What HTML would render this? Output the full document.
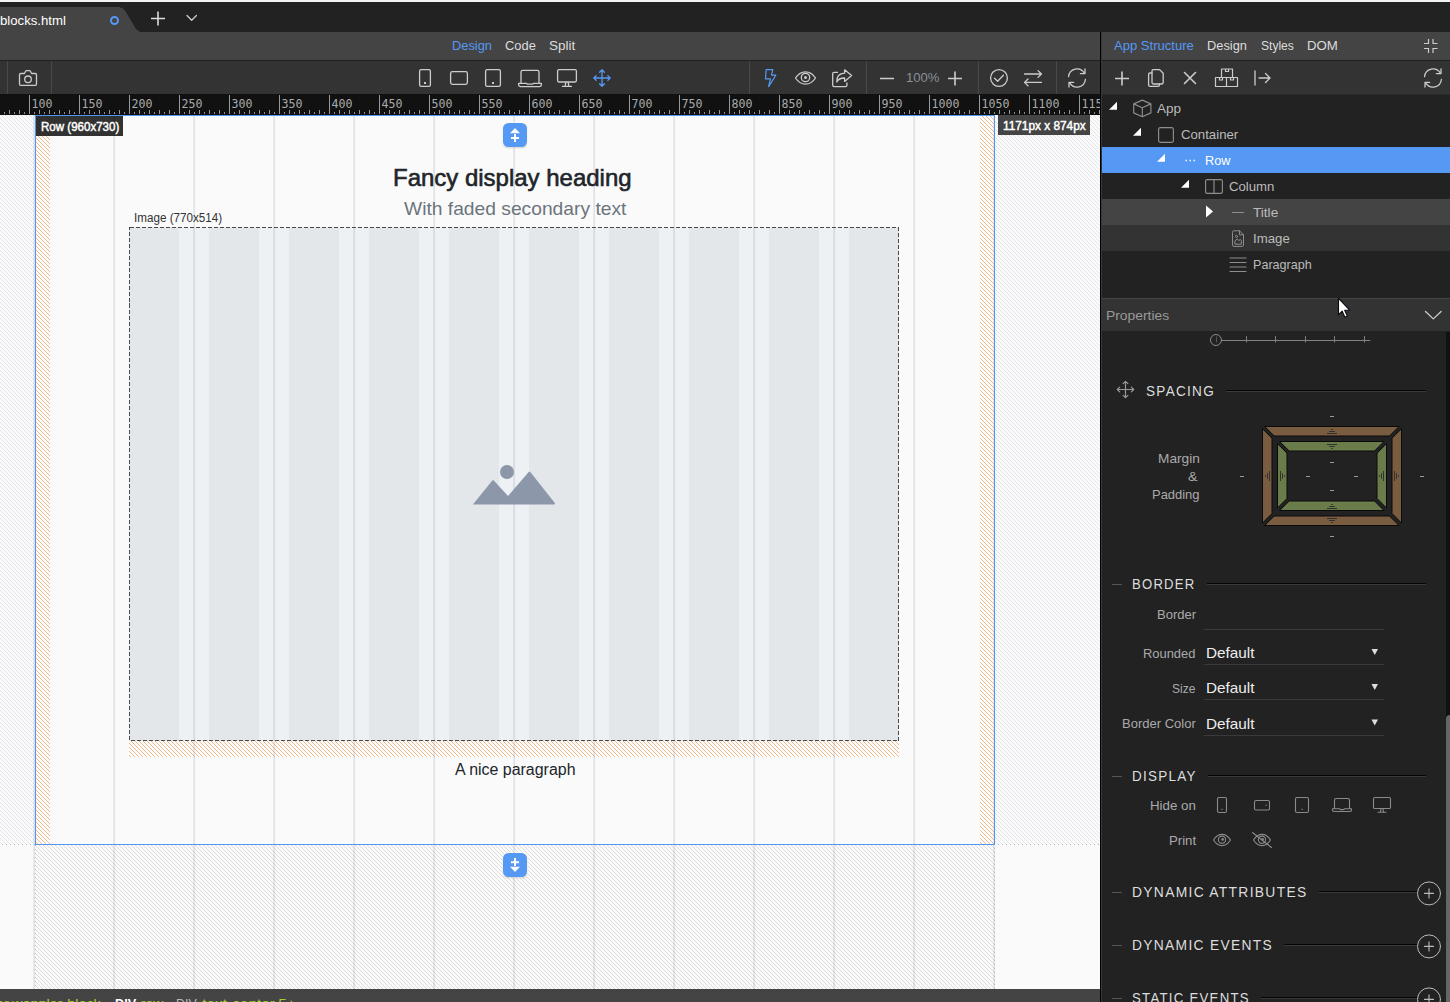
<!DOCTYPE html>
<html lang="en">
<head>
<meta charset="utf-8">
<title>blocks.html</title>
<style>
*{box-sizing:border-box;margin:0;padding:0}
html,body{width:1450px;height:1002px;overflow:hidden;background:#222;font-family:"Liberation Sans",sans-serif;font-size:13px;color:#bbb}
.abs{position:absolute}
#app{position:relative;width:1450px;height:1002px;overflow:hidden;background:#222}
svg{display:block;overflow:visible}
.t{position:absolute;display:inline-block;white-space:nowrap;transform-origin:0 0}
#topline{left:0;top:0;width:1450px;height:2px;background:#f4f4f4}
#tabbar{left:0;top:2px;width:1450px;height:30px;background:#222}
#tab{left:0;top:7px;width:140px;height:25px;background:#444;clip-path:polygon(0 0,119px 0,123px 1.5px,126px 5px,136px 22px,140px 25px,0 25px)}
#tabdot{left:109.5px;top:15.5px;width:9.5px;height:9.5px;border:2px solid #5599f5;border-radius:50%}
#viewbar{left:0;top:32px;width:1100px;height:28px;background:#444}
#toolbar{left:0;top:60px;width:1100px;height:34px;background:#333;border-top:1px solid #202020}
.vsep{position:absolute;top:61px;width:1px;height:33px;background:#484848}
#ruler{left:0;top:94px;width:1100px;height:21px;background:#111;overflow:hidden}
#ruler .t5{position:absolute;left:-1px;bottom:1px;width:1101px;height:2px;background:repeating-linear-gradient(90deg,#8a8a8a 0,#8a8a8a 1px,transparent 1px,transparent 5px)}
#ruler .t10{position:absolute;left:-1px;bottom:1px;width:1101px;height:4px;background:repeating-linear-gradient(90deg,#999 0,#999 1px,transparent 1px,transparent 10px)}
#ruler .t50{position:absolute;left:-21px;top:1px;width:1121px;height:19px;background:repeating-linear-gradient(90deg,#999 0,#999 1px,transparent 1px,transparent 50px)}
#canvas{left:0;top:115px;width:1100px;height:874px;background:#fafafa;overflow:hidden}
.ins{width:24px;height:24px;border-radius:5.5px;background:#5599f5;box-shadow:0 0 0 .6px rgba(255,250,240,.9),0 1px 1.5px rgba(0,0,0,.25)}
.lbl{height:20px;background:rgba(0,0,0,.8)}
#status{left:0;top:989px;width:1100px;height:13px;background:#444;overflow:hidden}
#divider{left:1100px;top:32px;width:2px;height:970px;background:#363636;border-left:1px solid #000}
#rtabs{left:1102px;top:32px;width:348px;height:28px;background:#444}
#rtool{left:1102px;top:60px;width:348px;height:35px;background:#333;border-top:1px solid #202020;border-bottom:1px solid #2a2a2a}
#tree{left:1102px;top:95px;width:348px;height:204px;background:#222}
.row{position:absolute;left:0;width:348px;height:26px}
#prophead{left:1102px;top:298px;width:348px;height:34px;background:#333;border-top:1px solid #454545;border-bottom:1px solid #161616}
#props{left:1102px;top:331px;width:348px;height:671px;background:#222;overflow:hidden}
</style>
<style>
#h1{transform:scaleX(1.0163)}
#h2{transform:scaleX(1.0345)}
#imglbl{transform:scaleX(0.9721)}
#para{transform:scaleX(1.0220)}
#rowlbl{transform:scaleX(0.9710)}
#sizelbl{transform:scaleX(0.9954)}
#st1{transform:scaleX(1.1072)}
#st2{transform:scaleX(0.9782)}
#st3{transform:scaleX(1.0707)}
#st4{transform:scaleX(0.9598)}
#st5{transform:scaleX(1.1819)}
#tabtxt{transform:scaleX(0.9838)}
#v1{transform:scaleX(0.9859)}
#v2{transform:scaleX(0.9911)}
#v3{transform:scaleX(1.0397)}
#zoom{transform:scaleX(1.0075)}
#r1{transform:scaleX(1.0038)}
#r2{transform:scaleX(0.9859)}
#r3{transform:scaleX(0.9264)}
#r4{transform:scaleX(1.0183)}
#tr0{transform:scaleX(1.0415)}
#tr1{transform:scaleX(1.0146)}
#tr2{transform:scaleX(0.9763)}
#tr3{transform:scaleX(1.0135)}
#tr4{transform:scaleX(1.0466)}
#tr5{transform:scaleX(1.0182)}
#tr6{transform:scaleX(0.9684)}
#ph{transform:scaleX(1.0667)}
#sh1{transform:scaleX(0.9831)}
#sh2{transform:scaleX(0.9502)}
#sh3{transform:scaleX(0.9780)}
#sh4{transform:scaleX(1.0032)}
#sh5{transform:scaleX(1.0010)}
#sh6{transform:scaleX(0.9589)}
#l1{transform:scaleX(1.0516)}
#l2{transform:scaleX(1.0900)}
#l3{transform:scaleX(0.9954)}
#l4{transform:scaleX(1.0018)}
#l5{transform:scaleX(0.9928)}
#l6{transform:scaleX(0.9211)}
#l7{transform:scaleX(1.0013)}
#l8{transform:scaleX(1.0220)}
#l9{transform:scaleX(1.0137)}
#d1{transform:scaleX(1.0204)}
#d2{transform:scaleX(1.0204)}
#d3{transform:scaleX(1.0204)}
</style>
</head>
<body>
<div id="app">
<div id="topline" class="abs"></div><div id="tabbar" class="abs"></div><div id="tab" class="abs"></div><div id="tabdot" class="abs"></div>
<div id="viewbar" class="abs"></div><div id="toolbar" class="abs"></div>
<div class="vsep" style="left:7px"></div>
<div class="vsep" style="left:51px"></div>
<div class="vsep" style="left:749px"></div>
<div class="vsep" style="left:866px"></div>
<div class="vsep" style="left:978px"></div>
<div class="vsep" style="left:1056px"></div>
<div id="ruler" class="abs"><div class="t5"></div><div class="t10"></div><div class="t50"></div></div>
<div id="divider" class="abs"></div><div id="rtabs" class="abs"></div><div id="rtool" class="abs"></div>
<div id="canvas" class="abs">
<svg class="abs" style="left:0;top:0" width="1100" height="874" shape-rendering="crispEdges">
<defs>
<pattern id="hg" x="0" y="3" width="4" height="4" patternUnits="userSpaceOnUse"><rect width="4" height="4" fill="#fbfbfb"/><path d="M0 0h1v1h-1zM1 1h1v1h-1zM2 2h1v1h-1zM3 3h1v1h-1z" fill="#e1e5e9"/></pattern>
<pattern id="hd" x="0" y="3" width="4" height="4" patternUnits="userSpaceOnUse"><rect width="4" height="4" fill="#fbfbfb"/><path d="M0 0h1v1h-1zM1 1h1v1h-1zM2 2h1v1h-1zM3 3h1v1h-1z" fill="#dbdbdb"/></pattern>
<pattern id="ho" x="0" y="3" width="4" height="4" patternUnits="userSpaceOnUse"><rect width="4" height="4" fill="#fcfdfe"/><path d="M0 0h1v1h-1zM1 1h1v1h-1zM2 2h1v1h-1zM3 3h1v1h-1z" fill="#f6b985"/></pattern>
<pattern id="st" x="129" width="80" height="8" patternUnits="userSpaceOnUse"><rect width="50" height="8" fill="#e4e7ea"/><rect x="50" width="30" height="8" fill="#edf1f4"/></pattern>
</defs>
<rect x="0" y="0" width="35" height="730" fill="url(#hg)"/>
<rect x="995" y="0" width="105" height="730" fill="url(#hg)"/>
<rect x="35" y="730" width="960" height="144" fill="url(#hd)"/>
<rect x="36" y="1" width="14" height="728" fill="url(#ho)"/>
<rect x="980" y="1" width="14" height="728" fill="url(#ho)"/>
<rect x="129" y="112" width="770" height="514" fill="url(#st)"/>
<rect x="129" y="626" width="770" height="16" fill="url(#ho)"/>
<rect x="33" y="0" width="1" height="874" fill="#8a96a8" fill-opacity=".17"/><rect x="34" y="0" width="1" height="874" fill="#8a96a8" fill-opacity=".24"/>
<rect x="113" y="0" width="1" height="874" fill="#8a96a8" fill-opacity=".17"/><rect x="114" y="0" width="1" height="874" fill="#8a96a8" fill-opacity=".24"/>
<rect x="193" y="0" width="1" height="874" fill="#8a96a8" fill-opacity=".17"/><rect x="194" y="0" width="1" height="874" fill="#8a96a8" fill-opacity=".24"/>
<rect x="273" y="0" width="1" height="874" fill="#8a96a8" fill-opacity=".17"/><rect x="274" y="0" width="1" height="874" fill="#8a96a8" fill-opacity=".24"/>
<rect x="353" y="0" width="1" height="874" fill="#8a96a8" fill-opacity=".17"/><rect x="354" y="0" width="1" height="874" fill="#8a96a8" fill-opacity=".24"/>
<rect x="433" y="0" width="1" height="874" fill="#8a96a8" fill-opacity=".17"/><rect x="434" y="0" width="1" height="874" fill="#8a96a8" fill-opacity=".24"/>
<rect x="513" y="0" width="1" height="874" fill="#8a96a8" fill-opacity=".17"/><rect x="514" y="0" width="1" height="874" fill="#8a96a8" fill-opacity=".24"/>
<rect x="593" y="0" width="1" height="874" fill="#8a96a8" fill-opacity=".17"/><rect x="594" y="0" width="1" height="874" fill="#8a96a8" fill-opacity=".24"/>
<rect x="673" y="0" width="1" height="874" fill="#8a96a8" fill-opacity=".17"/><rect x="674" y="0" width="1" height="874" fill="#8a96a8" fill-opacity=".24"/>
<rect x="753" y="0" width="1" height="874" fill="#8a96a8" fill-opacity=".17"/><rect x="754" y="0" width="1" height="874" fill="#8a96a8" fill-opacity=".24"/>
<rect x="833" y="0" width="1" height="874" fill="#8a96a8" fill-opacity=".17"/><rect x="834" y="0" width="1" height="874" fill="#8a96a8" fill-opacity=".24"/>
<rect x="913" y="0" width="1" height="874" fill="#8a96a8" fill-opacity=".17"/><rect x="914" y="0" width="1" height="874" fill="#8a96a8" fill-opacity=".24"/>
<rect x="993" y="0" width="1" height="874" fill="#8a96a8" fill-opacity=".17"/><rect x="994" y="0" width="1" height="874" fill="#8a96a8" fill-opacity=".24"/>
<path d="M0 729.5H35" stroke="#b4b4b4" stroke-width="1" stroke-dasharray="1 3" stroke-dashoffset="2" fill="none"/><path d="M995 729.5H1100" stroke="#b4b4b4" stroke-width="1" stroke-dasharray="1 3" stroke-dashoffset="1" fill="none"/>
<path d="M35.5 730V874" stroke="#b4b4b4" stroke-width="1" stroke-dasharray="1 3" fill="none"/><path d="M994.5 729V874" stroke="#b4b4b4" stroke-width="1" stroke-dasharray="1 3" fill="none"/>
<rect x="129.5" y="112.5" width="769" height="513" fill="none" stroke="#4a4a4a" stroke-width="1" stroke-dasharray="4 2"/>
<rect x="35.5" y="0.5" width="959" height="729" fill="none" stroke="#4f95f3" stroke-width="1"/>
</svg>
<svg class="abs" style="left:472px;top:349px" width="84" height="41" viewBox="472 464 84 41"><path d="M472.900 504.400 L492.300 480.600 Q493 479.8 493.8 480.6 L508 495.9 L528.7 471.9 Q529.5 471 530.3 471.9 L554.8 503 Q555.6 504.4 554 504.4 Z" fill="#8c97a9"/><circle cx="507" cy="472" r="7" fill="#8c97a9"/></svg>
<div class="abs ins" style="left:503px;top:8px"><svg width="24" height="24"><path d="M7 10.200L12 5L17 10.200Z" fill="#fff"/><path d="M12 11v8M8 15h8" stroke="#fff" stroke-width="2" fill="none"/></svg></div>
<div class="abs ins" style="left:503px;top:738px"><svg width="24" height="24"><path d="M7 13.800L12 19L17 13.800Z" fill="#fff"/><path d="M12 5v8M8 9.200h8" stroke="#fff" stroke-width="2" fill="none"/></svg></div>
<div class="abs lbl" style="left:36px;top:1px;width:87px;height:19.5px"></div>
<div class="abs lbl" style="left:998px;top:0;width:92px;height:19.6px;background:#444"></div>
</div>
<span id="h1" class="t" style="left:392.50px;top:162.12px;font-size:23.6px;line-height:32px;color:#212529;-webkit-text-stroke:0.6px #212529;">Fancy display heading</span>
<span id="h2" class="t" style="left:403.60px;top:197.16px;font-size:18.6px;line-height:24px;color:#6c757d;">With faded secondary text</span>
<span id="imglbl" class="t" style="left:133.90px;top:210.84px;font-size:12px;line-height:14px;color:#333;">Image (770x514)</span>
<span id="para" class="t" style="left:454.50px;top:760.49px;font-size:15.6px;line-height:20px;color:#212529;">A nice paragraph</span>
<span id="rowlbl" class="t" style="left:40.80px;top:119.08px;font-size:11.9px;line-height:16px;color:#fff;-webkit-text-stroke:0.45px #fff;">Row (960x730)</span>
<span id="sizelbl" class="t" style="left:1003.00px;top:117.98px;font-size:11.9px;line-height:16px;color:#fff;-webkit-text-stroke:0.45px #fff;">1171px x 874px</span>
<div id="status" class="abs"></div>
<span id="st1" class="t" style="left:-4.20px;top:995.10px;font-size:13px;line-height:18px;color:#a4cf30;">er.wappler-block</span>
<span id="st2" class="t" style="left:115.40px;top:995.10px;font-size:13px;line-height:18px;color:#fff;font-weight:bold;">DIV</span>
<span id="st3" class="t" style="left:137.30px;top:995.10px;font-size:13px;line-height:18px;color:#a4cf30;">.row</span>
<span id="st4" class="t" style="left:175.80px;top:995.10px;font-size:13px;line-height:18px;color:#bbb;">DIV</span>
<span id="st5" class="t" style="left:197.80px;top:995.10px;font-size:13px;line-height:18px;color:#a4cf30;">.text-center.5+</span>
<span id="tabtxt" class="t" style="left:0.20px;top:12.16px;font-size:13.4px;line-height:18px;color:#fff;">blocks.html</span>
<span id="v1" class="t" style="left:451.70px;top:36.50px;font-size:13px;line-height:18px;color:#5599f5;">Design</span>
<span id="v2" class="t" style="left:505.30px;top:36.50px;font-size:13px;line-height:18px;color:#ddd;">Code</span>
<span id="v3" class="t" style="left:549.30px;top:36.50px;font-size:13px;line-height:18px;color:#ddd;">Split</span>
<span id="zoom" class="t" style="left:905.80px;top:68.80px;font-size:13px;line-height:18px;color:#8a8f98;">100%</span>
<span id="r1" class="t" style="left:1113.80px;top:36.50px;font-size:13px;line-height:18px;color:#5599f5;">App Structure</span>
<span id="r2" class="t" style="left:1207.20px;top:36.50px;font-size:13px;line-height:18px;color:#ddd;">Design</span>
<span id="r3" class="t" style="left:1260.80px;top:36.50px;font-size:13px;line-height:18px;color:#ddd;">Styles</span>
<span id="r4" class="t" style="left:1307.40px;top:36.50px;font-size:13px;line-height:18px;color:#ddd;">DOM</span>
<span class="t" style="left:31.5px;top:96.5px;font:11.6px/14px 'DejaVu Sans Mono','Liberation Mono',monospace;color:#aaa;">100</span>
<span class="t" style="left:81.5px;top:96.5px;font:11.6px/14px 'DejaVu Sans Mono','Liberation Mono',monospace;color:#aaa;">150</span>
<span class="t" style="left:131.5px;top:96.5px;font:11.6px/14px 'DejaVu Sans Mono','Liberation Mono',monospace;color:#aaa;">200</span>
<span class="t" style="left:181.5px;top:96.5px;font:11.6px/14px 'DejaVu Sans Mono','Liberation Mono',monospace;color:#aaa;">250</span>
<span class="t" style="left:231.5px;top:96.5px;font:11.6px/14px 'DejaVu Sans Mono','Liberation Mono',monospace;color:#aaa;">300</span>
<span class="t" style="left:281.5px;top:96.5px;font:11.6px/14px 'DejaVu Sans Mono','Liberation Mono',monospace;color:#aaa;">350</span>
<span class="t" style="left:331.5px;top:96.5px;font:11.6px/14px 'DejaVu Sans Mono','Liberation Mono',monospace;color:#aaa;">400</span>
<span class="t" style="left:381.5px;top:96.5px;font:11.6px/14px 'DejaVu Sans Mono','Liberation Mono',monospace;color:#aaa;">450</span>
<span class="t" style="left:431.5px;top:96.5px;font:11.6px/14px 'DejaVu Sans Mono','Liberation Mono',monospace;color:#aaa;">500</span>
<span class="t" style="left:481.5px;top:96.5px;font:11.6px/14px 'DejaVu Sans Mono','Liberation Mono',monospace;color:#aaa;">550</span>
<span class="t" style="left:531.5px;top:96.5px;font:11.6px/14px 'DejaVu Sans Mono','Liberation Mono',monospace;color:#aaa;">600</span>
<span class="t" style="left:581.5px;top:96.5px;font:11.6px/14px 'DejaVu Sans Mono','Liberation Mono',monospace;color:#aaa;">650</span>
<span class="t" style="left:631.5px;top:96.5px;font:11.6px/14px 'DejaVu Sans Mono','Liberation Mono',monospace;color:#aaa;">700</span>
<span class="t" style="left:681.5px;top:96.5px;font:11.6px/14px 'DejaVu Sans Mono','Liberation Mono',monospace;color:#aaa;">750</span>
<span class="t" style="left:731.5px;top:96.5px;font:11.6px/14px 'DejaVu Sans Mono','Liberation Mono',monospace;color:#aaa;">800</span>
<span class="t" style="left:781.5px;top:96.5px;font:11.6px/14px 'DejaVu Sans Mono','Liberation Mono',monospace;color:#aaa;">850</span>
<span class="t" style="left:831.5px;top:96.5px;font:11.6px/14px 'DejaVu Sans Mono','Liberation Mono',monospace;color:#aaa;">900</span>
<span class="t" style="left:881.5px;top:96.5px;font:11.6px/14px 'DejaVu Sans Mono','Liberation Mono',monospace;color:#aaa;">950</span>
<span class="t" style="left:931.5px;top:96.5px;font:11.6px/14px 'DejaVu Sans Mono','Liberation Mono',monospace;color:#aaa;">1000</span>
<span class="t" style="left:981.5px;top:96.5px;font:11.6px/14px 'DejaVu Sans Mono','Liberation Mono',monospace;color:#aaa;">1050</span>
<span class="t" style="left:1031.5px;top:96.5px;font:11.6px/14px 'DejaVu Sans Mono','Liberation Mono',monospace;color:#aaa;">1100</span>
<span class="t" style="left:1081.5px;top:96.5px;font:11.6px/14px 'DejaVu Sans Mono','Liberation Mono',monospace;color:#aaa;width:18px;overflow:hidden;">1150</span>
<svg class="abs" style="left:0;top:0" width="1450" height="95" fill="none" stroke="#ccc" stroke-width="1.300" stroke-linecap="round" stroke-linejoin="round">
<path d="M158 11.500v14M151 18.500h14" stroke="#ddd" stroke-width="1.600" stroke-linecap="butt"/>
<path d="M187 15.500l4.700 4.700l4.700-4.700"/>
<path d="M20.800 73.500h3.600l1.200-2.300q.3-.6 1-.6h2.800q.7 0 1 .6l1.200 2.300h3.600q1.300 0 1.300 1.300v9.200q0 1.300-1.300 1.300h-14.400q-1.300 0-1.300-1.300v-9.200q0-1.300 1.300-1.300z"/><circle cx="28" cy="79.300" r="3.300"/>
<rect x="419.600" y="69.600" width="10.800" height="16.800" rx="1.600"/><rect x="424" y="82" width="2" height="2" fill="#ccc" stroke="none"/>
<rect x="450.600" y="71.600" width="16.800" height="12.800" rx="1.800"/>
<rect x="485.600" y="69.600" width="14.800" height="16.800" rx="1.600"/><rect x="492" y="82" width="2" height="2" fill="#ccc" stroke="none"/>
<path d="M521 83v-11q0-1.600 1.600-1.600h14.800q1.600 0 1.600 1.600v11"/><path d="M518.600 83.400h8l1 .8h4.800l1-.8h8v1.400q0 1.800-1.800 1.800h-19.200q-1.800 0-1.800-1.800z"/>
<rect x="557.600" y="69.600" width="18.800" height="12.400" rx="1.400"/><path d="M565.800 82.200l-.6 4M568.200 82.200l.6 4M562.500 86.400h9"/>
<path d="M602 69.800v16.400M593.800 78h16.400M599.600 72.200l2.400-2.400l2.400 2.400M599.600 83.800l2.400 2.400l2.400-2.400M596.200 75.600l-2.400 2.400l2.400 2.400M607.800 75.600l2.400 2.400l-2.400 2.400" stroke="#5599f5"/>
<path d="M766.200 69.600h6.600l-1.300 5.600h4.300l-7.200 11.400l1.800-7.800h-4.900z" stroke="#5599f5" stroke-width="1.200"/>
<path d="M795.500 78q4.200-6.200 10-6.200t10 6.200q-4.200 6.200-10 6.200t-10-6.200z"/><circle cx="805.500" cy="77.500" r="4.200"/><circle cx="805.500" cy="77.500" r="1.500" fill="#ccc" stroke="none"/>
<path d="M837.500 72.400h-3.400q-1.400 0-1.400 1.400v11.400q0 1.400 1.400 1.400h11.400q1.400 0 1.400-1.400v-2.400"/><path d="M844.600 69.800l7 5.800l-7 5.800v-3.400q-5.600-.2-7.800 4q-.4-8.400 7.800-8.800z"/>
<path d="M880 78.500h14M948 78.500h14M955 71.500v14" stroke-width="1.600" stroke-linecap="butt"/>
<circle cx="999" cy="78" r="8.400"/><path d="M994.600 78.200l3 3l5.800-6"/>
<path d="M1024.500 74h17M1038 70.600l3.500 3.400l-3.500 3.400M1041.500 82.400h-17M1028 79l-3.500 3.400l3.500 3.400"/>
<path d="M1068.6 76.5a8.500 8.500 0 0 1 15.600-3.700M1085.4 79.5a8.500 8.500 0 0 1 -15.600 3.700"/><path d="M1085 69v4.600h-4.600M1069 87v-4.600h4.600"/>
<path d="M1424.6 76.5a8.500 8.500 0 0 1 15.600-3.700M1441.4 79.5a8.500 8.500 0 0 1 -15.600 3.700"/><path d="M1441 69v4.600h-4.600M1425 87v-4.600h4.600"/>
<path d="M1424 43.500h4.500v-4.500M1437.500 43.500h-4.500v-4.500M1424 48.500h4.500v4.500M1437.500 48.500h-4.500v4.500" stroke-linecap="butt" stroke-linejoin="miter" stroke-width="1.200"/>
<path d="M1115 78.500h14M1122 71.500v14" stroke-width="1.600" stroke-linecap="butt"/>
<path d="M1152 82.500v-11.500q0-1.400 1.400-1.400h6.200l3.600 3.600v9.400q0 1.400-1.400 1.400h-8.400q-1.400 0-1.400-1.500z"/><path d="M1152 73h-2q-1.400 0-1.400 1.400v10.600q0 1.400 1.400 1.400h8q1.400 0 1.400-1.400v-1"/>
<path d="M1184.500 72.500l11 11M1195.500 72.500l-11 11" stroke-width="1.600"/>
<path d="M1221.500 69h11v8.500h-11zM1215.500 77.500h11v9h-11zM1226.500 77.500h11v9h-11zM1225.500 69v2.500h3v-2.500M1219.500 77.500v2.500h3v-2.500M1230.500 77.500v2.500h3v-2.500" stroke-width="1.200"/>
<path d="M1255 71v14M1259 78h10.500M1265.500 73.500l4.500 4.500l-4.500 4.500"/>
</svg>
<div id="tree" class="abs">
<div class="row" style="top:0px;background:#222"></div>
<div class="row" style="top:26px;background:#222"></div>
<div class="row" style="top:52px;background:#5599f5"></div>
<div class="row" style="top:78px;background:#222"></div>
<div class="row" style="top:104px;background:#444"></div>
<div class="row" style="top:130px;background:#333"></div>
<div class="row" style="top:156px;background:#222"></div>
<svg class="abs" style="left:0;top:0" width="348" height="200" fill="none" stroke="#8e8e8e" stroke-width="1.150" stroke-linecap="round" stroke-linejoin="round"><path d="M15 6.7v8h-8z" fill="#fff" stroke="none"/><path d="M40.3 5.100000000000001l8.600 3.800v9l-8.600 3.800l-8.600-3.800v-9zM31.699999999999996 8.9l8.600 3.800l8.600-3.800M40.3 12.700000000000001v9"/><path d="M39 32.7v8h-8z" fill="#fff" stroke="none"/><rect x="56.6" y="32.6" width="14.800" height="14.800" rx="1.800"/><path d="M63 58.7v8h-8z" fill="#fff" stroke="none"/><path d="M83.5 65.5h1.400M87.5 65.5h1.400M91.5 65.5h1.400" stroke="#fff" stroke-width="1.600" stroke-linecap="butt"/><path d="M87 84.7v8h-8z" fill="#fff" stroke="none"/><rect x="103.59999999999991" y="84.6" width="16.800" height="13.800" rx="1.600"/><path d="M112 84.6v13.800"/><path d="M104 110.5l7 6l-7 6z" fill="#fff" stroke="none"/><path d="M130.5 117.5h11"/><path d="M130.5 137.0q0-1.200 1.200-1.200h5.800l4 4v10.400q0 1.200-1.200 1.200h-8.600q-1.200 0-1.200-1.200zM137.5 135.8v4h4" stroke-width="1"/><path d="M132.9 148.8v-2.800l2.200-2l1.800 1.600l1.400-1.200l1 1v3.400z" stroke-width="1"/><circle cx="134.5" cy="141.4" r="1.100" stroke-width="1"/><path d="M128 163h16M128 167.5h16M128 172h16M128 176.5h16" stroke-width="1.100"/></svg>
</div>
<span id="tr0" class="t" style="left:1156.80px;top:99.70px;font-size:13px;line-height:18px;color:#bbb;">App</span>
<span id="tr1" class="t" style="left:1180.60px;top:125.70px;font-size:13px;line-height:18px;color:#bbb;">Container</span>
<span id="tr2" class="t" style="left:1204.80px;top:151.70px;font-size:13px;line-height:18px;color:#fff;">Row</span>
<span id="tr3" class="t" style="left:1228.70px;top:177.70px;font-size:13px;line-height:18px;color:#bbb;">Column</span>
<span id="tr4" class="t" style="left:1252.80px;top:203.70px;font-size:13px;line-height:18px;color:#bbb;">Title</span>
<span id="tr5" class="t" style="left:1252.80px;top:229.70px;font-size:13px;line-height:18px;color:#bbb;">Image</span>
<span id="tr6" class="t" style="left:1252.80px;top:255.70px;font-size:13px;line-height:18px;color:#bbb;">Paragraph</span>
<div id="prophead" class="abs"></div>
<span id="ph" class="t" style="left:1105.80px;top:307.10px;font-size:13px;line-height:18px;color:#999;">Properties</span>
<svg class="abs" style="left:1102px;top:299px" width="348" height="32" fill="none" stroke="#ccc" stroke-width="1.300" stroke-linecap="round" stroke-linejoin="round"><path d="M323.500 12.500l7.800 7.400l7.800-7.400"/></svg>
<div id="props" class="abs">
<svg class="abs" style="left:0;top:0" width="348" height="671" fill="none" stroke-linecap="round" stroke-linejoin="round"><circle cx="114" cy="9" r="5.500" stroke="#8a8a8a"/><path d="M119.5 9.5H268" stroke="#828282"/><path d="M144.5 5.5V11" stroke="#828282"/><path d="M173.5 5.5V11" stroke="#828282"/><path d="M203.5 5.5V11" stroke="#828282"/><path d="M232.5 5.5V11" stroke="#828282"/><path d="M262.5 5.5V11" stroke="#828282"/><path d="M114.5 6v5" stroke="#555"/><rect x="124" y="59" width="200" height="1" fill="#050505"/><rect x="124" y="60" width="200" height="1" fill="#3a3a3a"/><rect x="10" y="253" width="10" height="1" fill="#555"/><rect x="105" y="252" width="219" height="1" fill="#050505"/><rect x="105" y="253" width="219" height="1" fill="#3a3a3a"/><rect x="10" y="445" width="10" height="1" fill="#555"/><rect x="106" y="444" width="218" height="1" fill="#050505"/><rect x="106" y="445" width="218" height="1" fill="#3a3a3a"/><rect x="10" y="561" width="10" height="1" fill="#555"/><rect x="217" y="560" width="99" height="1" fill="#050505"/><rect x="217" y="561" width="99" height="1" fill="#3a3a3a"/><circle cx="327" cy="562.4" r="11.500" stroke="#bbb" stroke-width="1" fill="#222"/><path d="M322.5 562.4h9M327 557.9v9" stroke="#bbb" stroke-width="1.100"/><rect x="10" y="614" width="10" height="1" fill="#555"/><rect x="182" y="613" width="134" height="1" fill="#050505"/><rect x="182" y="614" width="134" height="1" fill="#3a3a3a"/><circle cx="327" cy="615.4" r="11.500" stroke="#bbb" stroke-width="1" fill="#222"/><path d="M322.5 615.4h9M327 610.9v9" stroke="#bbb" stroke-width="1.100"/><rect x="10" y="667" width="10" height="1" fill="#555"/><rect x="159" y="666" width="157" height="1" fill="#050505"/><rect x="159" y="667" width="157" height="1" fill="#3a3a3a"/><circle cx="327" cy="668.4" r="11.500" stroke="#bbb" stroke-width="1" fill="#222"/><path d="M322.5 668.4h9M327 663.9v9" stroke="#bbb" stroke-width="1.100"/><path d="M23.5 50.3v16.400M15.3 58.5h16.400M21.1 52.7l2.400-2.400l2.400 2.400M21.1 64.3l2.400 2.400l2.400-2.400M17.7 56.1l-2.400 2.400l2.400 2.400M29.3 56.1l2.400 2.400l-2.400 2.400" stroke="#999" stroke-width="1.200"/><path d="M163 95.5H297L287.5 105H172.5Z" fill="#7a5c40" stroke="#0a0a0a" stroke-width="1" stroke-linejoin="miter"/><path d="M163 194.5H297L287.5 185H172.5Z" fill="#7a5c40" stroke="#0a0a0a" stroke-width="1" stroke-linejoin="miter"/><path d="M160.5 98V192L170 182.5V107.5Z" fill="#7a5c40" stroke="#0a0a0a" stroke-width="1" stroke-linejoin="miter"/><path d="M299.5 98V192L290 182.5V107.5Z" fill="#7a5c40" stroke="#0a0a0a" stroke-width="1" stroke-linejoin="miter"/><path d="M178 110.5H282L272.5 120H187.5Z" fill="#6b7c4b" stroke="#0a0a0a" stroke-width="1" stroke-linejoin="miter"/><path d="M178 179.5H282L272.5 170H187.5Z" fill="#6b7c4b" stroke="#0a0a0a" stroke-width="1" stroke-linejoin="miter"/><path d="M175.5 113V177L185 167.5V122.5Z" fill="#6b7c4b" stroke="#0a0a0a" stroke-width="1" stroke-linejoin="miter"/><path d="M284.5 113V177L275 167.5V122.5Z" fill="#6b7c4b" stroke="#0a0a0a" stroke-width="1" stroke-linejoin="miter"/><path d="M225 102.5h10M227.2 100.5h5.600M229.2 98.5h1.600" stroke="#2a2a2a" stroke-width=".9" stroke-linecap="butt"/><path d="M225 113.5h10M227.2 115.5h5.600M229.2 117.5h1.600" stroke="#2a2a2a" stroke-width=".9" stroke-linecap="butt"/><path d="M225 177.5h10M227.2 175.5h5.600M229.2 173.5h1.600" stroke="#2a2a2a" stroke-width=".9" stroke-linecap="butt"/><path d="M225 187.5h10M227.2 189.5h5.600M229.2 191.5h1.600" stroke="#2a2a2a" stroke-width=".9" stroke-linecap="butt"/><path d="M167.5 140v10M165.5 142.2v5.600M163.5 144.2v1.600" stroke="#2a2a2a" stroke-width=".9" stroke-linecap="butt"/><path d="M178.5 140v10M180.5 142.2v5.600M182.5 144.2v1.600" stroke="#2a2a2a" stroke-width=".9" stroke-linecap="butt"/><path d="M281.5 140v10M279.5 142.2v5.600M277.5 144.2v1.600" stroke="#2a2a2a" stroke-width=".9" stroke-linecap="butt"/><path d="M292.5 140v10M294.5 142.2v5.600M296.5 144.2v1.600" stroke="#2a2a2a" stroke-width=".9" stroke-linecap="butt"/><path d="M228 85.5h4" stroke="#999" stroke-width="1" stroke-linecap="butt"/><path d="M228 205.5h4" stroke="#999" stroke-width="1" stroke-linecap="butt"/><path d="M138 145.5h4" stroke="#999" stroke-width="1" stroke-linecap="butt"/><path d="M318 145.5h4" stroke="#999" stroke-width="1" stroke-linecap="butt"/><path d="M228 131.5h4" stroke="#999" stroke-width="1" stroke-linecap="butt"/><path d="M228 159.5h4" stroke="#999" stroke-width="1" stroke-linecap="butt"/><path d="M204 145.5h4" stroke="#999" stroke-width="1" stroke-linecap="butt"/><path d="M252 145.5h4" stroke="#999" stroke-width="1" stroke-linecap="butt"/><path d="M102 298.5H282" stroke="#3a3a3a" stroke-width="1"/><path d="M102 333.5H282" stroke="#3a3a3a" stroke-width="1"/><path d="M102 368.5H282" stroke="#3a3a3a" stroke-width="1"/><path d="M102 404.5H282" stroke="#3a3a3a" stroke-width="1"/><path d="M269.5 318h6.500l-3.250 6z" fill="#ddd" stroke="none"/><path d="M269.5 353h6.500l-3.250 6z" fill="#ddd" stroke="none"/><path d="M269.5 388.5h6.500l-3.250 6z" fill="#ddd" stroke="none"/><rect x="115.5" y="466.5" width="9" height="15" rx="1.500" stroke="#8a8a8a" stroke-width="1.100"/><rect x="119.4" y="477.8" width="1.200" height="1.200" fill="#8a8a8a" stroke="none"/><rect x="152.5" y="469.5" width="15" height="9.500" rx="1.500" stroke="#8a8a8a" stroke-width="1.100"/><rect x="163.6" y="473.6" width="1.200" height="1.200" fill="#8a8a8a" stroke="none"/><rect x="193.5" y="466.5" width="13" height="15" rx="1.500" stroke="#8a8a8a" stroke-width="1.100"/><rect x="199.4" y="477.8" width="1.200" height="1.200" fill="#8a8a8a" stroke="none"/><path d="M232.5 477.5v-8.500q0-1.500 1.500-1.500h12q1.500 0 1.500 1.500v8.500" stroke="#8a8a8a" stroke-width="1.100"/><path d="M230.5 477.8h7l1 .8h3l1-.8h7v1.200q0 1.500-1.500 1.500h-16q-1.500 0-1.500-1.500z" stroke="#8a8a8a" stroke-width="1.100"/><rect x="271.5" y="466.5" width="17" height="11" rx="1.300" stroke="#8a8a8a" stroke-width="1.100"/><path d="M279 477.7l-.5 3.300M281 477.7l.5 3.300M276 481.3h8" stroke="#8a8a8a" stroke-width="1.100"/><path d="M111.5 509q3.600-5.600 8.500-5.600t8.500 5.600q-3.600 5.600-8.500 5.600t-8.500-5.600z" stroke="#8a8a8a" stroke-width="1.100"/><circle cx="120" cy="508.7" r="3.600" stroke="#8a8a8a" stroke-width="1.100"/><circle cx="120.6" cy="508.4" r="1.300" fill="#8a8a8a" stroke="none"/><path d="M151.5 509q3.600-5.600 8.500-5.600t8.500 5.600q-3.600 5.600-8.500 5.600t-8.500-5.600z" stroke="#8a8a8a" stroke-width="1.100"/><circle cx="160" cy="508.7" r="3.600" stroke="#8a8a8a" stroke-width="1.100"/><circle cx="160.6" cy="508.4" r="1.300" fill="#8a8a8a" stroke="none"/><path d="M150.5 501.5l19 15" stroke="#8a8a8a" stroke-width="1.100"/><rect x="344" y="1" width="4" height="670" fill="#111" stroke="none"/><rect x="344" y="384" width="8" height="300" rx="4" fill="#666" stroke="none"/></svg>
</div>
<span id="sh1" class="t" style="left:1145.60px;top:382.02px;font-size:13.8px;line-height:20px;color:#ddd;letter-spacing:1.3px;">SPACING</span>
<span id="sh2" class="t" style="left:1132.10px;top:575.02px;font-size:13.8px;line-height:20px;color:#ddd;letter-spacing:1.3px;">BORDER</span>
<span id="sh3" class="t" style="left:1132.10px;top:767.02px;font-size:13.8px;line-height:20px;color:#ddd;letter-spacing:1.3px;">DISPLAY</span>
<span id="sh4" class="t" style="left:1132.10px;top:883.02px;font-size:13.8px;line-height:20px;color:#ddd;letter-spacing:1.3px;">DYNAMIC ATTRIBUTES</span>
<span id="sh5" class="t" style="left:1132.10px;top:936.02px;font-size:13.8px;line-height:20px;color:#ddd;letter-spacing:1.3px;">DYNAMIC EVENTS</span>
<span id="sh6" class="t" style="left:1132.10px;top:989.02px;font-size:13.8px;line-height:20px;color:#ddd;letter-spacing:1.3px;">STATIC EVENTS</span>
<span id="l1" class="t" style="left:1157.80px;top:449.60px;font-size:13px;line-height:18px;color:#aaa;">Margin</span>
<span id="l2" class="t" style="left:1188.40px;top:467.60px;font-size:13px;line-height:18px;color:#aaa;">&amp;</span>
<span id="l3" class="t" style="left:1152.10px;top:485.70px;font-size:13px;line-height:18px;color:#aaa;">Padding</span>
<span id="l4" class="t" style="left:1156.50px;top:605.70px;font-size:13px;line-height:18px;color:#aaa;">Border</span>
<span id="l5" class="t" style="left:1143.00px;top:644.60px;font-size:13px;line-height:18px;color:#aaa;">Rounded</span>
<span id="l6" class="t" style="left:1172.30px;top:679.60px;font-size:13px;line-height:18px;color:#aaa;">Size</span>
<span id="l7" class="t" style="left:1121.80px;top:714.70px;font-size:13px;line-height:18px;color:#aaa;">Border Color</span>
<span id="l8" class="t" style="left:1149.80px;top:796.90px;font-size:13px;line-height:18px;color:#aaa;">Hide on</span>
<span id="l9" class="t" style="left:1168.50px;top:831.70px;font-size:13px;line-height:18px;color:#aaa;">Print</span>
<span id="d1" class="t" style="left:1206.10px;top:642.90px;font-size:15px;line-height:20px;color:#eee;">Default</span>
<span id="d2" class="t" style="left:1206.10px;top:677.90px;font-size:15px;line-height:20px;color:#eee;">Default</span>
<span id="d3" class="t" style="left:1206.10px;top:713.50px;font-size:15px;line-height:20px;color:#eee;">Default</span>
<svg class="abs" style="left:1337px;top:297px" width="16" height="22"><path d="M1.500 1.300v16.400l3.700-3.500l2.700 6.100l2.500-1.100l-2.700-6h5z" fill="#fff" stroke="#0a0a14" stroke-width="1.100" stroke-linejoin="round"/></svg>
</div>
</body>
</html>
